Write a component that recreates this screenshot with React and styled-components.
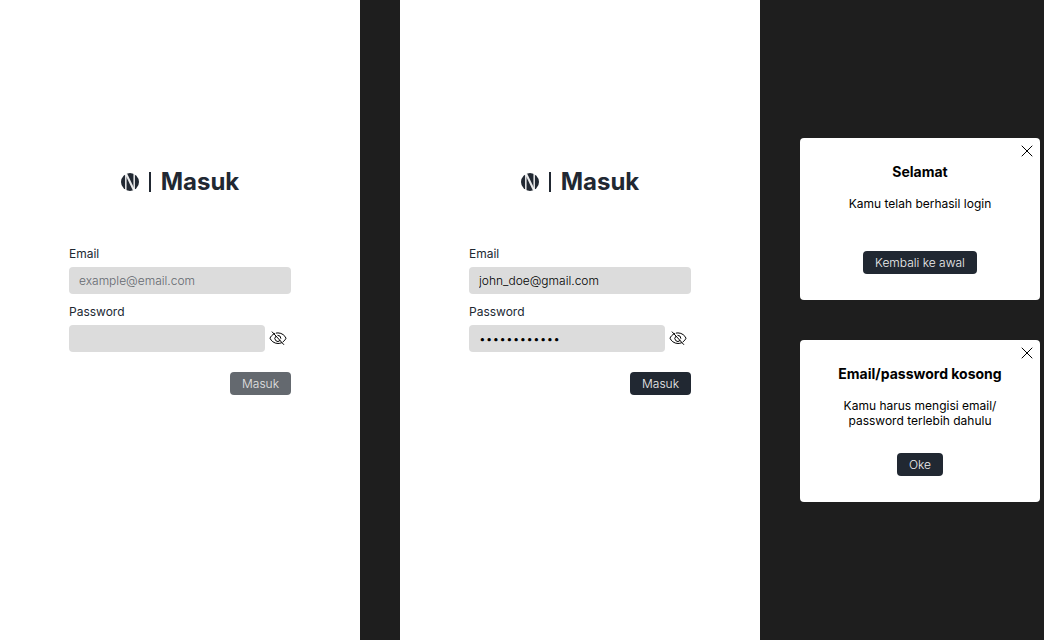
import React, { useId, useState } from "react";
import styled, { createGlobalStyle } from "styled-components";

const GlobalStyle = createGlobalStyle`
  *, *::before, *::after { box-sizing: border-box; }
  body {
    margin: 0;
    background: #1e1e1e;
    color: #212832;
    font-family: Inter, "Liberation Sans", sans-serif;
    font-size: 12px;
    line-height: 15px;
  }
`;

const Board = styled.main`
  display: grid;
  grid-template-columns: 3fr 3fr 2fr;
  column-gap: 40px;
  min-height: 100vh;
  padding-right: 4px;
`;

const Screen = styled.section`
  display: flex;
  flex-direction: column;
  align-items: center;
  padding: 167px 20px 40px;
  background: #fff;
`;

const Brand = styled.header`
  display: flex;
  align-items: center;
  gap: 10px;
  margin-bottom: 50px;
`;

const Divider = styled.span`
  width: 2px;
  height: 20px;
  background: #212832;
`;

const Heading = styled.h1`
  margin: 0;
  font-size: 24px;
  font-weight: 700;
  line-height: 29px;
`;

const Form = styled.form`
  display: flex;
  flex-direction: column;
  gap: 10px;
  width: 100%;
  max-width: 222px;
`;

const Field = styled.div`
  display: flex;
  flex-direction: column;
  gap: 6px;
`;

const Label = styled.label`
  font-weight: 400;
`;

const InputRow = styled.div`
  display: flex;
  align-items: flex-start;
`;

const Input = styled.input`
  flex: 1;
  min-width: 0;
  height: 27px;
  padding: 6px 10px;
  border: 0;
  border-radius: 4px;
  background: #dcdcdc;
  color: #000;
  font-family: inherit;
  font-size: 12px;
  font-weight: 300;
  line-height: 15px;

  &::placeholder {
    color: #64686f;
    opacity: 1;
  }
`;

const IconButton = styled.button`
  display: flex;
  align-items: center;
  justify-content: center;
  width: 26px;
  height: 26px;
  padding: 0;
  border: 0;
  background: none;
  color: #000;
  cursor: pointer;
`;

const Button = styled.button`
  align-self: ${(p) => (p.$end ? "flex-end" : "center")};
  margin-top: ${(p) => (p.$end ? "10px" : "0")};
  padding: 4px 12px;
  border: 0;
  border-radius: 4px;
  background: ${(p) => (p.$muted ? "#64696f" : "#212832")};
  color: ${(p) => (p.$muted ? "#e6e6e6" : "#f0f0f0")};
  font-family: inherit;
  font-size: 12px;
  font-weight: 300;
  line-height: 15px;
  cursor: pointer;
`;

const Dialogs = styled.aside`
  display: flex;
  flex-direction: column;
  justify-content: center;
  gap: 40px;
`;

const Card = styled.div`
  position: relative;
  display: flex;
  flex-direction: column;
  align-items: center;
  padding: 25px 20px 26px;
  border-radius: 4px;
  background: #fff;
  color: #000;
  text-align: center;
`;

const CardTitle = styled.h2`
  margin: 0 0 16px;
  font-size: 14px;
  font-weight: 700;
  line-height: 17px;
`;

const CardText = styled.p`
  max-width: 160px;
  min-height: 30px;
  margin: 0 0 25px;
`;

const CloseButton = styled(IconButton)`
  position: absolute;
  top: 0;
  right: 0;
`;

function Logo() {
  return (
    <svg width="18" height="18" viewBox="0 0 18 18" aria-hidden="true">
      <circle cx="9" cy="9" r="9" fill="#212832" />
      <path
        d="M4.8 0V18M13.2 0V18"
        stroke="#fff"
        strokeWidth="1.6"
        strokeOpacity="0.85"
      />
      <path
        d="M5 0.6L13 17.4"
        stroke="#fff"
        strokeWidth="2.2"
        strokeOpacity="0.9"
      />
    </svg>
  );
}

function EyeOffIcon() {
  return (
    <svg
      width="18"
      height="18"
      viewBox="0 0 18 18"
      fill="none"
      stroke="currentColor"
      strokeWidth="1"
      strokeLinecap="round"
      aria-hidden="true"
    >
      <path d="M5.5 4.5C3.2 5.7 1.6 7.7 1 9.2c1 2.500 4 5.300 8 5.300 1.300 0 2.400-.3 3.500-.7" />
      <path d="M7.200 4.100C7.800 4 8.400 3.900 9 3.900c4 0 7 2.800 8 5.300-.5 1.200-1.500 2.600-3 3.700" />
      <path d="M6.700 7.400a3 3 0 0 0 4.300 4.200M8.900 6.300a3 3 0 0 1 3 3" />
      <path d="M3.200 2.900L14.700 15.500" />
    </svg>
  );
}

function CloseIcon() {
  return (
    <svg
      width="12"
      height="12"
      viewBox="0 0 12 12"
      stroke="currentColor"
      strokeWidth="1"
      strokeLinecap="round"
      aria-hidden="true"
    >
      <path d="M1 1L11 11M11 1L1 11" />
    </svg>
  );
}

function LoginScreen({ initialEmail = "", initialPassword = "" }) {
  const id = useId();
  const [email, setEmail] = useState(initialEmail);
  const [password, setPassword] = useState(initialPassword);
  const [visible, setVisible] = useState(false);

  return (
    <Screen>
      <Brand>
        <Logo />
        <Divider />
        <Heading>Masuk</Heading>
      </Brand>
      <Form onSubmit={(e) => e.preventDefault()}>
        <Field>
          <Label htmlFor={`${id}-email`}>Email</Label>
          <InputRow>
            <Input
              id={`${id}-email`}
              type="email"
              placeholder="example@email.com"
              value={email}
              onChange={(e) => setEmail(e.target.value)}
            />
          </InputRow>
        </Field>
        <Field>
          <Label htmlFor={`${id}-password`}>Password</Label>
          <InputRow>
            <Input
              id={`${id}-password`}
              type={visible ? "text" : "password"}
              value={password}
              onChange={(e) => setPassword(e.target.value)}
            />
            <IconButton
              type="button"
              aria-label="Tampilkan password"
              onClick={() => setVisible(!visible)}
            >
              <EyeOffIcon />
            </IconButton>
          </InputRow>
        </Field>
        <Button type="submit" $end $muted={!email || !password}>
          Masuk
        </Button>
      </Form>
    </Screen>
  );
}

function Dialog({ title, text, action }) {
  const id = useId();
  return (
    <Card role="dialog" aria-labelledby={id}>
      <CloseButton type="button" aria-label="Tutup">
        <CloseIcon />
      </CloseButton>
      <CardTitle id={id}>{title}</CardTitle>
      <CardText>{text}</CardText>
      <Button type="button">{action}</Button>
    </Card>
  );
}

export default function App() {
  return (
    <>
      <GlobalStyle />
      <Board>
        <LoginScreen />
        <LoginScreen
          initialEmail="john_doe@gmail.com"
          initialPassword="johndoe12345"
        />
        <Dialogs>
          <Dialog
            title="Selamat"
            text="Kamu telah berhasil login"
            action="Kembali ke awal"
          />
          <Dialog
            title="Email/password kosong"
            text="Kamu harus mengisi email/ password terlebih dahulu"
            action="Oke"
          />
        </Dialogs>
      </Board>
    </>
  );
}
